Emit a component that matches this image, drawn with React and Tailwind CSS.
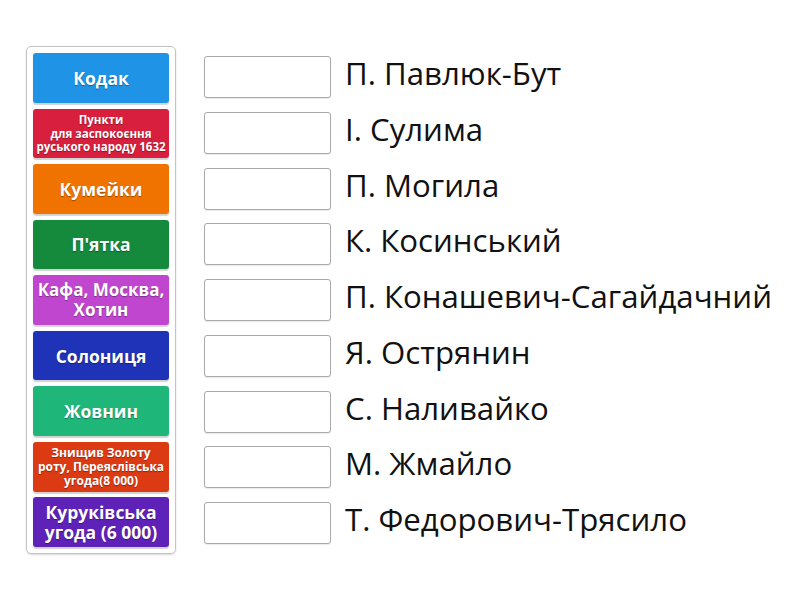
const tiles = [
  { text: "Кодак", bg: "bg-[#1f94e6]", size: "text-[17.5px] leading-[20px]" },
  { text: "Пункти\nдля заспокоєння\nруського народу 1632", bg: "bg-[#d81f3d]", size: "text-[11.5px] leading-[13.5px]" },
  { text: "Кумейки", bg: "bg-[#f07300]", size: "text-[17.5px] leading-[20px]" },
  { text: "П'ятка", bg: "bg-[#158a3d]", size: "text-[17.5px] leading-[20px]" },
  { text: "Кафа, Москва,\nХотин", bg: "bg-[#c046cf]", size: "text-[17px] leading-[20px]" },
  { text: "Солониця", bg: "bg-[#1f33b8]", size: "text-[17.5px] leading-[20px]" },
  { text: "Жовнин", bg: "bg-[#1fb67a]", size: "text-[17.5px] leading-[20px]" },
  { text: "Знищив Золоту\nроту, Переяслівська\nугода(8 000)", bg: "bg-[#dc3a13]", size: "text-[12px] leading-[14px]" },
  { text: "Куруківська\nугода (6 000)", bg: "bg-[#5f22b9]", size: "text-[17.5px] leading-[20px]" },
];

const names = [
  "П. Павлюк-Бут",
  "І. Сулима",
  "П. Могила",
  "К. Косинський",
  "П. Конашевич-Сагайдачний",
  "Я. Острянин",
  "С. Наливайко",
  "М. Жмайло",
  "Т. Федорович-Трясило",
];

export default function App() {
  return (
    <div className="w-[800px] h-[600px] bg-white font-['Open_Sans',sans-serif] flex pl-[26px] pt-[46px]">
      {/* Плитки */}
      <div className="w-[150px] h-[508px] border border-[#c4c4c4] rounded-[5px] p-[6px] flex flex-col gap-[5.75px] shadow-[0_1px_2px_rgba(0,0,0,0.15)]">
        {tiles.map((t, i) => (
          <div
            key={i}
            className={`${t.bg} h-[50px] rounded-[3px] flex items-center justify-center text-center text-white font-bold whitespace-pre-line shadow-[0_2px_1px_rgba(0,0,0,0.18)] [text-shadow:0_1px_1px_rgba(0,0,0,0.35)] ${t.size}`}
          >
            {t.text}
          </div>
        ))}
      </div>

      {/* Відповіді */}
      <div className="ml-[28px] pt-[6px] flex flex-col gap-[5.75px]">
        {names.map((n, i) => (
          <div key={i} className="h-[50px] flex items-center">
            <div className="w-[127px] h-[42px] border border-[#a9a9a9] rounded-[3px] bg-white shadow-[0_1px_1px_rgba(0,0,0,0.08)]" />
            <span className="ml-[14px] mb-[8px] text-[31.2px] leading-[40px] text-[#111] whitespace-nowrap">{n}</span>
          </div>
        ))}
      </div>
    </div>
  );
}
